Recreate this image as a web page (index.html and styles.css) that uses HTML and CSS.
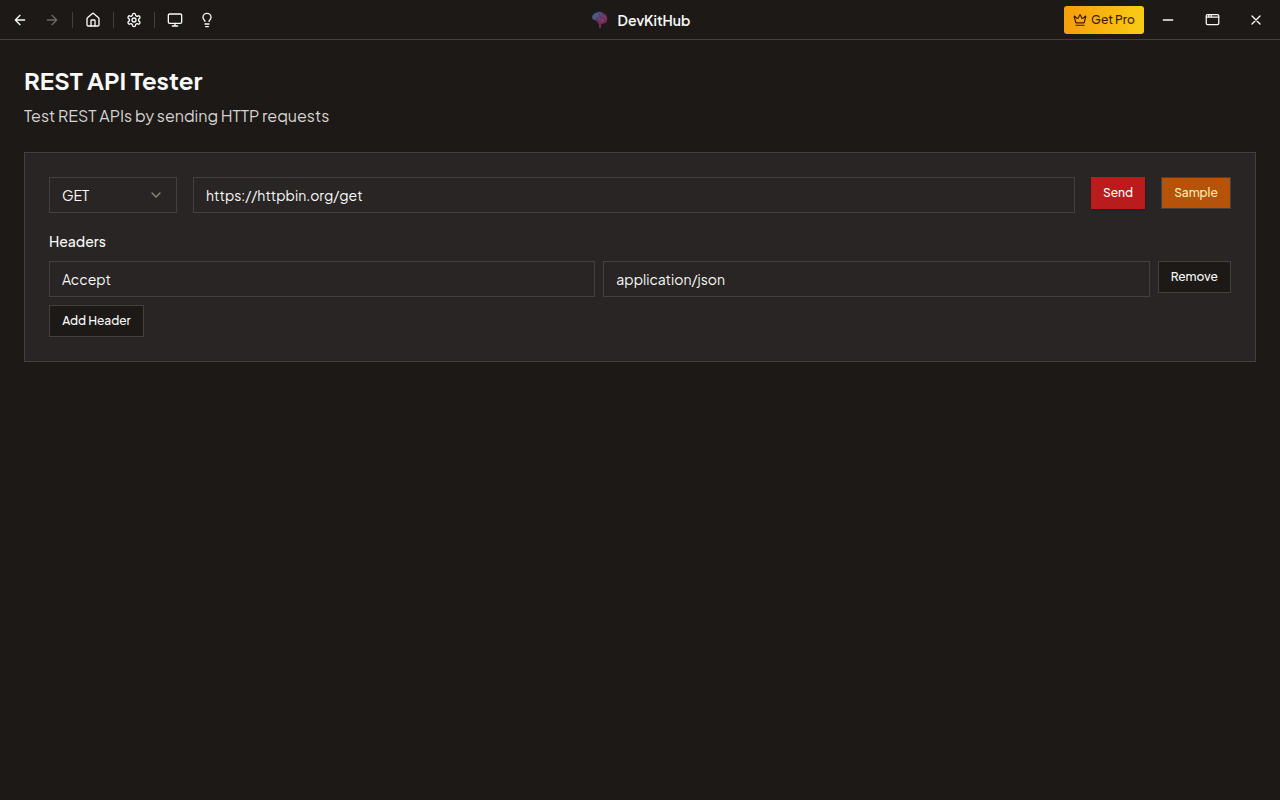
FILE: index.html
```html
<!DOCTYPE html>
<html lang="en">
<head>
<meta charset="utf-8">
<title>DevKitHub</title>
<link rel="stylesheet" href="styles.css">
</head>
<body>
<header class="titlebar">
  <nav class="tools">
    <button class="tool" aria-label="Back"><svg class="icon" viewBox="0 0 24 24"><path d="m12 19-7-7 7-7M19 12H5"/></svg></button>
    <button class="tool disabled" aria-label="Forward"><svg class="icon" viewBox="0 0 24 24"><path d="M5 12h14M12 5l7 7-7 7"/></svg></button>
    <span class="divider"></span>
    <button class="tool" aria-label="Home"><svg class="icon" viewBox="0 0 24 24"><path d="M15 21v-8a1 1 0 0 0-1-1h-4a1 1 0 0 0-1 1v8"/><path d="M3 10a2 2 0 0 1 .709-1.528l7-5.999a2 2 0 0 1 2.582 0l7 5.999A2 2 0 0 1 21 10v9a2 2 0 0 1-2 2H5a2 2 0 0 1-2-2z"/></svg></button>
    <span class="divider"></span>
    <button class="tool" aria-label="Settings"><svg class="icon" viewBox="0 0 24 24"><path d="M12.22 2h-.44a2 2 0 0 0-2 2v.18a2 2 0 0 1-1 1.73l-.43.25a2 2 0 0 1-2 0l-.15-.08a2 2 0 0 0-2.73.73l-.22.38a2 2 0 0 0 .73 2.73l.15.1a2 2 0 0 1 1 1.72v.51a2 2 0 0 1-1 1.74l-.15.09a2 2 0 0 0-.73 2.73l.22.38a2 2 0 0 0 2.73.73l.15-.08a2 2 0 0 1 2 0l.43.25a2 2 0 0 1 1 1.73V20a2 2 0 0 0 2 2h.44a2 2 0 0 0 2-2v-.18a2 2 0 0 1 1-1.73l.43-.25a2 2 0 0 1 2 0l.15.08a2 2 0 0 0 2.73-.73l.22-.39a2 2 0 0 0-.73-2.73l-.15-.08a2 2 0 0 1-1-1.74v-.5a2 2 0 0 1 1-1.74l.15-.09a2 2 0 0 0 .73-2.73l-.22-.38a2 2 0 0 0-2.73-.73l-.15.08a2 2 0 0 1-2 0l-.43-.25a2 2 0 0 1-1-1.73V4a2 2 0 0 0-2-2z"/><circle cx="12" cy="12" r="3"/></svg></button>
    <span class="divider"></span>
    <button class="tool" aria-label="Display"><svg class="icon" viewBox="0 0 24 24"><rect x="2" y="3" width="20" height="14" rx="2"/><path d="M8 21h8M12 17v4"/></svg></button>
    <button class="tool" aria-label="Ideas"><svg class="icon" viewBox="0 0 24 24"><path d="M15 14c.2-1 .7-1.7 1.5-2.5 1-.9 1.5-2.2 1.5-3.5A6 6 0 0 0 6 8c0 1 .2 2.2 1.5 3.5.7.7 1.3 1.5 1.5 2.5M9 18h6M10 22h4"/></svg></button>
  </nav>
  <div class="brand">
    <svg class="logo" viewBox="0 0 20 20">
      <defs><linearGradient id="brain" x1="0" y1="0" x2="1" y2="1"><stop offset="0" stop-color="#2f75ad"/><stop offset=".45" stop-color="#5e3560"/><stop offset="1" stop-color="#961650"/></linearGradient></defs>
      <path fill="url(#brain)" d="M2.200 8C1.900 5.500 3.700 3.200 6 2.900 8 1.500 11 1.500 13 2.900c2.600.4 4.300 2.800 4.200 5.500.3 2.700-1 5.200-3.200 4.900-1.300.5-2.500.4-3 1.200l.2 3.300-2.200.4-.1-4-2.600-3.700C4 10.400 2.500 9.600 2.200 8z"/>
      <path class="folds" d="M3.500 8c1.500-2 2.500 0 3.500-1.500M6 4c2 0 1 2.500 3 2.500M11 3.500c-1 2 2 2 1 4M14 5c-.5 2 1.500 2 1.500 4M8 9.500c2-1.500 3 1 5 .5M11 12.500c0-2 3-1.500 3-3.500"/>
    </svg>
    <span class="brand-name">DevKitHub</span>
  </div>
  <div class="window-actions">
    <button class="pro"><svg class="crown" viewBox="0 0 24 24"><path d="M11.562 3.266a.5.5 0 0 1 .876 0L15.390 8.870a1 1 0 0 0 1.516.294L21.183 5.500a.5.5 0 0 1 .798.519l-2.834 10.246a1 1 0 0 1-.956.734H5.810a1 1 0 0 1-.957-.734L2.020 6.020a.5.5 0 0 1 .798-.519l4.276 3.664a1 1 0 0 0 1.516-.294zM5 21h14"/></svg><span class="pro-text">Get Pro</span></button>
    <button class="win" aria-label="Minimize"><svg class="icon" viewBox="0 0 24 24"><path d="M5 12h14"/></svg></button>
    <button class="win" aria-label="Maximize"><svg class="icon maximize" viewBox="0 0 24 24"><rect x="2" y="4" width="20" height="16" rx="2"/><path d="M10 4v4M2 8h20M6 4v4"/></svg></button>
    <button class="win" aria-label="Close"><svg class="icon" viewBox="0 0 24 24"><path d="M18 6 6 18M6 6l12 12"/></svg></button>
  </div>
</header>
<main class="page">
  <h1 class="title">REST API Tester</h1>
  <p class="subtitle">Test REST APIs by sending HTTP requests</p>
  <section class="card">
    <div class="request">
      <div class="field method"><span class="method-text">GET</span><svg class="icon chevron" viewBox="0 0 24 24"><path d="m6 9 6 6 6-6"/></svg></div>
      <div class="field url">https://httpbin.org/get</div>
      <button class="btn send">Send</button>
      <button class="btn sample">Sample</button>
    </div>
    <div class="headers-label">Headers</div>
    <div class="header-row">
      <div class="field key">Accept</div>
      <div class="field value">application/json</div>
      <button class="btn remove">Remove</button>
    </div>
    <button class="btn add">Add Header</button>
  </section>
</main>
</body>
</html>
```
FILE: styles.css
```css
* { box-sizing: border-box; }
body {
  margin: 0;
  height: 100vh;
  overflow: hidden;
  background: #1c1917;
  color: #fafaf9;
  font-family: "Plus Jakarta Sans", Inter, sans-serif;
  font-size: 14px;
}
button { font: inherit; color: inherit; border: 0; padding: 0; background: none; }
.icon { width: 16px; height: 16px; flex: none; }
.icon, .crown { display: block; fill: none; stroke: currentColor; stroke-width: 2; stroke-linecap: round; stroke-linejoin: round; }
.titlebar {
  height: 40px;
  display: grid;
  grid-template-columns: 1fr auto 1fr;
  align-items: center;
  border-bottom: 1px solid #44403c;
}
.tools { display: flex; align-items: center; padding-left: 4px; }
.tool { width: 32px; height: 32px; display: grid; place-items: center; }
.disabled { opacity: .35; }
.divider { width: 1px; height: 16px; margin: 0 4px; background: #44403c; }
.brand { display: flex; align-items: center; gap: 8px; }
.logo { width: 20px; height: 20px; }
.folds { fill: none; stroke: #a27790; stroke-width: .6; opacity: .6; }
.brand-name { font-weight: 600; line-height: 20px; white-space: nowrap; }
.window-actions { display: flex; align-items: center; justify-content: flex-end; padding-right: 2px; }
.pro {
  width: 80px;
  height: 28px;
  margin-right: 2px;
  display: flex;
  align-items: center;
  justify-content: center;
  gap: 4px;
  border-radius: 3px;
  background: linear-gradient(to right, #f59e0b, #facc15);
  color: #451a03;
  font-size: 12px;
  font-weight: 500;
  white-space: nowrap;
}
.crown { width: 14px; height: 14px; }
.win { width: 44px; height: 36px; display: grid; place-items: center; }
.maximize { width: 15px; height: 15px; }
.page { padding: 24px; }
.title { margin: 0; font-size: 24px; line-height: 32px; font-weight: 700; }
.subtitle { margin: 8px 0 24px; font-size: 16px; line-height: 24px; color: #d6d3d1; }
.card { padding: 24px; border: 1px solid #44403c; background: #292524; }
.request { display: flex; align-items: flex-start; gap: 16px; }
.field { height: 36px; padding: 0 12px; border: 1px solid #44403c; display: flex; align-items: center; min-width: 0; line-height: 20px; }
.method { width: 128px; justify-content: space-between; }
.chevron { color: #8c8783; }
.url { flex: 1; }
.btn { height: 32px; border: 1px solid #44403c; background: #1c1917; font-size: 12px; font-weight: 500; line-height: 16px; text-align: center; white-space: nowrap; }
.send { width: 54px; border-color: #b91c1c; background: #b91c1c; box-shadow: 0 1px 2px rgb(0 0 0 / .25); }
.sample { width: 70px; background: #b45309; color: #fdecb2; }
.headers-label { margin: 18px 0 10px; line-height: 20px; font-weight: 500; }
.header-row { display: flex; align-items: flex-start; gap: 8px; margin-bottom: 8px; }
.key, .value { flex: 1; }
.remove { width: 73.300px; }
.add { display: block; width: 95px; }
```
